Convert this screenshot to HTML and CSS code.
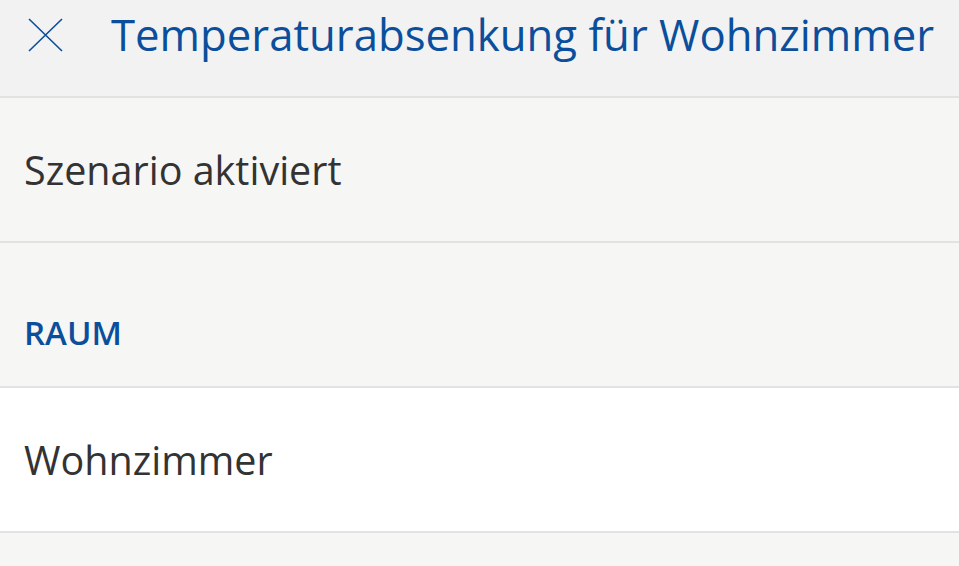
FILE: index.html
```html
<!DOCTYPE html>
<html lang="de">

<head>
    <meta charset="UTF-8">
    <meta name="viewport" content="width=device-width, initial-scale=1.0">
    <title>Temperaturabsenkung</title>
    <link rel="stylesheet" href="styles.css">
</head>

<body>
    <header class="topbar">
        <span class="close">
            <svg width="35" height="34" viewBox="0 0 35 34">
                <path d="M1 1 L34 33 M34 1 L1 33" stroke="#0b4f9c" stroke-width="1.6" fill="none" />
            </svg>
        </span>
        <h1 class="title">Temperaturabsenkung für Wohnzimmer</h1>
    </header>
    <main>
        <div class="row">Szenario aktiviert</div>
        <div class="section">RAUM</div>
        <div class="row row-white">Wohnzimmer</div>
    </main>
</body>

</html>
```

FILE: styles.css
```css
* {
    margin: 0;
    padding: 0;
    box-sizing: border-box;
}

body {
    background-color: #f6f6f5;
    font-family: "Open Sans", "Liberation Sans", sans-serif;
    color: #333333;
}

.topbar {
    height: 98px;
    background-color: #f2f2f2;
    border-bottom: 2px solid #e2e2e2;
    display: flex;
    align-items: flex-start;
    padding: 4px 0 0 28px;
}

.close {
    display: flex;
    width: 35px;
    height: 34px;
    margin-top: 14px;
}

.title {
    margin-left: 48px;
    font-size: 43.7px;
    font-weight: 400;
    line-height: 60px;
    color: #0b4f9c;
    white-space: nowrap;
}

.row {
    height: 145px;
    border-bottom: 2px solid #e2e2e2;
    display: flex;
    align-items: center;
    padding-left: 24px;
    font-size: 39.5px;
}

.row-white {
    background-color: #ffffff;
}

.section {
    height: 145px;
    border-bottom: 2px solid #e2e2e2;
    display: flex;
    align-items: flex-end;
    padding: 0 0 31px 24px;
    font-size: 33px;
    font-weight: 600;
    color: #0b4f9c;
}
```
